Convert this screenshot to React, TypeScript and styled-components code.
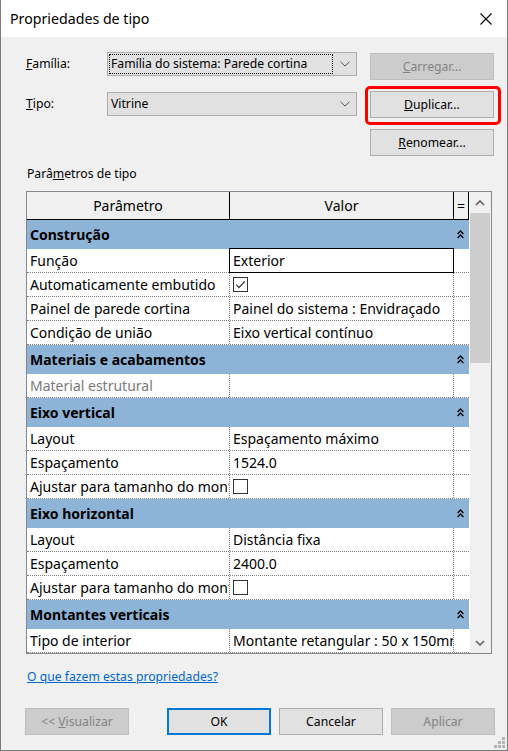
import React from 'react';
import styled, { createGlobalStyle, css } from 'styled-components';

const Global = createGlobalStyle`
  html, body { margin: 0; padding: 0; background: #f0f0f0; }
  body { font-family: "Noto Sans", "Open Sans", "DejaVu Sans", sans-serif; }
  * { box-sizing: border-box; }
`;

const FONT = `"Noto Sans", "Open Sans", "DejaVu Sans", sans-serif`;

const Window = styled.div`
  position: relative;
  width: 508px;
  height: 751px;
  border: 1px solid #7a7a7a;
  border-top: none;
  background: #f0f0f0;
  display: flex;
  flex-direction: column;
  font-family: ${FONT};
  font-size: 12.2px;
  color: #000;
  overflow: hidden;
`;

const TitleBar = styled.div`
  height: 37px;
  flex: none;
  background: #fff;
  display: flex;
  align-items: center;
  justify-content: space-between;
  padding-left: 9px;
`;

const Title = styled.div`
  font-size: 14.2px;
  line-height: 20px;
`;

const CloseButton = styled.div`
  width: 42px;
  height: 37px;
  display: flex;
  align-items: center;
  justify-content: center;
`;

const Body = styled.div`
  flex: 1;
  display: flex;
  flex-direction: column;
  padding: 0 12px 0 25px;
`;

const TopArea = styled.div`
  display: flex;
  margin-top: 15px;
`;

const Fields = styled.div`
  display: flex;
  flex-direction: column;
  gap: 16px;
`;

const FieldRow = styled.div`
  display: flex;
  align-items: center;
  height: 24px;
`;

const FieldLabel = styled.div`
  width: 81px;
  line-height: 20px;
`;

const Combo = styled.div`
  width: 250px;
  height: 24px;
  background: #e1e1e1;
  border: 1px solid #adadad;
  display: flex;
  align-items: stretch;
`;

const ComboText = styled.div<{ $focused?: boolean }>`
  flex: 1;
  margin: 1px 0 1px 1px;
  padding-left: 1px;
  border: 1px dotted ${(p) => (p.$focused ? '#000' : 'transparent')};
  display: flex;
  align-items: center;
  white-space: nowrap;
  overflow: hidden;
  line-height: 18px;
`;

const ComboArrow = styled.div`
  width: 23px;
  display: flex;
  align-items: center;
  justify-content: center;
`;

const SideButtons = styled.div`
  margin-left: auto;
  margin-right: 1px;
  margin-top: 1px;
  display: flex;
  flex-direction: column;
  gap: 11px;
`;

const Button = styled.div<{ $variant?: 'normal' | 'disabled' | 'default'; $w?: number }>`
  width: ${(p) => p.$w ?? 124}px;
  height: 27px;
  display: flex;
  align-items: center;
  justify-content: center;
  line-height: 18px;
  background: #e1e1e1;
  border: 1px solid #adadad;
  color: #000;
  white-space: nowrap;
  ${(p) =>
    p.$variant === 'disabled' &&
    css`
      background: #cccccc;
      border-color: #bfbfbf;
      color: #838383;
    `}
  ${(p) =>
    p.$variant === 'default' &&
    css`
      border: 2px solid #0078d7;
    `}
`;

const Highlighted = styled.div`
  position: relative;
  &::after {
    content: '';
    position: absolute;
    top: -5px;
    right: -7px;
    bottom: -7px;
    left: -5px;
    border: 3px solid #ff0000;
    border-radius: 5px;
    pointer-events: none;
  }
`;

const SectionLabel = styled.div`
  margin-top: 8px;
  margin-bottom: 7px;
  margin-left: 1px;
  line-height: 20px;
  height: 20px;
`;

const GridFrame = styled.div`
  width: 466px;
  height: 463px;
  border: 1px solid #828790;
  display: flex;
  background: #fff;
  font-size: 14px;
`;

const Grid = styled.div`
  width: 443px;
  display: flex;
  flex-direction: column;
  overflow: hidden;
  background: #fff;
`;

const HeaderRow = styled.div`
  display: flex;
  height: 28px;
  width: 442px;
  flex: none;
  background: #f0f0f0;
  border-bottom: 1px solid #000;
`;

const HeaderCell = styled.div<{ $w: number }>`
  width: ${(p) => p.$w}px;
  flex: none;
  border-right: 1px solid #000;
  display: flex;
  align-items: center;
  justify-content: center;
  line-height: 18px;
`;

const CategoryRow = styled.div`
  display: flex;
  align-items: center;
  height: 29px;
  width: 442px;
  flex: none;
  background: #8db3d6;
  font-weight: bold;
`;

const CategoryLabel = styled.div`
  flex: 1;
  padding-left: 3px;
  line-height: 18px;
`;

const CollapseIcon = styled.div`
  width: 15px;
  display: flex;
  justify-content: center;
  padding-right: 3px;
`;

const DataRow = styled.div`
  display: flex;
  height: 24px;
  width: 442px;
  flex: none;
  border-bottom: 1px dotted #7f7f7f;
`;

const ParamCell = styled.div<{ $disabled?: boolean }>`
  width: 203px;
  flex: none;
  padding-left: 3px;
  border-right: 1px dotted #7f7f7f;
  white-space: nowrap;
  overflow: hidden;
  display: flex;
  align-items: center;
  line-height: 18px;
  color: ${(p) => (p.$disabled ? '#7a7a7a' : '#000')};
`;

const ValueCell = styled.div<{ $editing?: boolean }>`
  position: relative;
  width: 224px;
  flex: none;
  padding-left: 3px;
  border-right: 1px dotted #7f7f7f;
  white-space: nowrap;
  overflow: ${(p) => (p.$editing ? 'visible' : 'hidden')};
  display: flex;
  align-items: center;
  line-height: 18px;
  ${(p) =>
    p.$editing &&
    css`
      &::after {
        content: '';
        position: absolute;
        top: -1px;
        left: -1px;
        right: -1px;
        bottom: -1px;
        border: 1px solid #000;
        pointer-events: none;
      }
    `}
`;

const EqCell = styled.div`
  width: 15px;
  flex: none;
`;

const CheckBox = styled.div`
  width: 15px;
  height: 15px;
  border: 1px solid #333;
  background: #fff;
  display: flex;
  align-items: center;
  justify-content: center;
`;

const Scrollbar = styled.div`
  width: 21px;
  margin-left: 1px;
  background: #f0f0f0;
  display: flex;
  flex-direction: column;
`;

const ScrollArrow = styled.div`
  height: 21px;
  flex: none;
  display: flex;
  align-items: center;
  justify-content: center;
  padding-right: 1px;
`;

const ScrollThumb = styled.div`
  height: 150px;
  width: 20px;
  background: #cdcdcd;
  flex: none;
`;

const ScrollTrack = styled.div`
  flex: 1;
`;

const HelpLink = styled.a`
  margin-top: 13px;
  margin-left: 1px;
  line-height: 20px;
  color: #0066cc;
  text-decoration: underline;
  align-self: flex-start;
  cursor: pointer;
`;

const Footer = styled.div`
  display: flex;
  margin-top: 21px;
  margin-left: -1px;
`;

const FooterGroup = styled.div`
  margin-left: auto;
  display: flex;
  gap: 8px;
`;

const Grip = styled.div`
  position: absolute;
  right: 2px;
  bottom: 2px;
  width: 11px;
  height: 11px;
  display: flex;
`;

type Item =
  | { kind: 'cat'; label: string }
  | { kind: 'row'; param: string; value?: string; check?: boolean; disabled?: boolean; editing?: boolean };

const items: Item[] = [
  { kind: 'cat', label: 'Construção' },
  { kind: 'row', param: 'Função', value: 'Exterior', editing: true },
  { kind: 'row', param: 'Automaticamente embutido', check: true },
  { kind: 'row', param: 'Painel de parede cortina', value: 'Painel do sistema : Envidraçado' },
  { kind: 'row', param: 'Condição de união', value: 'Eixo vertical contínuo' },
  { kind: 'cat', label: 'Materiais e acabamentos' },
  { kind: 'row', param: 'Material estrutural', value: '', disabled: true },
  { kind: 'cat', label: 'Eixo vertical' },
  { kind: 'row', param: 'Layout', value: 'Espaçamento máximo' },
  { kind: 'row', param: 'Espaçamento', value: '1524.0' },
  { kind: 'row', param: 'Ajustar para tamanho do montante', check: false },
  { kind: 'cat', label: 'Eixo horizontal' },
  { kind: 'row', param: 'Layout', value: 'Distância fixa' },
  { kind: 'row', param: 'Espaçamento', value: '2400.0' },
  { kind: 'row', param: 'Ajustar para tamanho do montante', check: false },
  { kind: 'cat', label: 'Montantes verticais' },
  { kind: 'row', param: 'Tipo de interior', value: 'Montante retangular : 50 x 150mm' },
];

const Chevron = ({ up }: { up?: boolean }) => (
  <svg width="10" height="6" viewBox="0 0 10 6">
    <path
      d={up ? 'M1 5 L5 1 L9 5' : 'M1 1 L5 5 L9 1'}
      fill="none"
      stroke="#606060"
      strokeWidth="1.6"
    />
  </svg>
);

const ComboChevron = () => (
  <svg width="10" height="6" viewBox="0 0 10 6">
    <path d="M0.5 0.8 L5 5 L9.5 0.8" fill="none" stroke="#555" strokeWidth="1" />
  </svg>
);

const DoubleUp = () => (
  <svg width="7" height="9" viewBox="0 0 7 9">
    <path d="M0.6 4 L3.5 1 L6.4 4 M0.6 8 L3.5 5 L6.4 8" fill="none" stroke="#000" strokeWidth="1.3" />
  </svg>
);

const CloseIcon = () => (
  <svg width="12" height="12" viewBox="0 0 12 12">
    <path d="M0.5 0.5 L11.5 11.5 M11.5 0.5 L0.5 11.5" stroke="#000" strokeWidth="1.1" />
  </svg>
);

const Check = () => (
  <svg width="13" height="13" viewBox="0 0 13 13">
    <path d="M2.2 6.8 L5 9.5 L10.8 3.5" fill="none" stroke="#444" strokeWidth="1.3" />
  </svg>
);

const GripIcon = () => (
  <svg width="11" height="11" viewBox="0 0 11 11">
    {[
      [8, 0],
      [4, 4],
      [8, 4],
      [0, 8],
      [4, 8],
      [8, 8],
    ].map(([x, y], i) => (
      <rect key={i} x={x} y={y} width="3" height="3" fill="#b4b4b4" />
    ))}
  </svg>
);

export default function App() {
  return (
    <>
      <Global />
      <Window>
        <TitleBar>
          <Title>Propriedades de tipo</Title>
          <CloseButton>
            <CloseIcon />
          </CloseButton>
        </TitleBar>
        <Body>
          <TopArea>
            <Fields>
              <FieldRow>
                <FieldLabel>
                  <u>F</u>amília:
                </FieldLabel>
                <Combo>
                  <ComboText $focused>Família do sistema: Parede cortina</ComboText>
                  <ComboArrow>
                    <ComboChevron />
                  </ComboArrow>
                </Combo>
              </FieldRow>
              <FieldRow>
                <FieldLabel>
                  <u>T</u>ipo:
                </FieldLabel>
                <Combo>
                  <ComboText>Vitrine</ComboText>
                  <ComboArrow>
                    <ComboChevron />
                  </ComboArrow>
                </Combo>
              </FieldRow>
            </Fields>
            <SideButtons>
              <Button $variant="disabled">
                <span>
                  <u>C</u>arregar...
                </span>
              </Button>
              <Highlighted>
                <Button>
                  <span>
                    <u>D</u>uplicar...
                  </span>
                </Button>
              </Highlighted>
              <Button>
                <span>
                  <u>R</u>enomear...
                </span>
              </Button>
            </SideButtons>
          </TopArea>
          <SectionLabel>
            Parâ<u>m</u>etros de tipo
          </SectionLabel>
          <GridFrame>
            <Grid>
              <HeaderRow>
                <HeaderCell $w={203}>Parâmetro</HeaderCell>
                <HeaderCell $w={224}>Valor</HeaderCell>
                <HeaderCell $w={15}>=</HeaderCell>
              </HeaderRow>
              {items.map((it, i) =>
                it.kind === 'cat' ? (
                  <CategoryRow key={i}>
                    <CategoryLabel>{it.label}</CategoryLabel>
                    <CollapseIcon>
                      <DoubleUp />
                    </CollapseIcon>
                  </CategoryRow>
                ) : (
                  <DataRow key={i}>
                    <ParamCell $disabled={it.disabled}>{it.param}</ParamCell>
                    <ValueCell $editing={it.editing}>
                      {it.check !== undefined ? (
                        <CheckBox>{it.check && <Check />}</CheckBox>
                      ) : (
                        it.value
                      )}
                    </ValueCell>
                    <EqCell />
                  </DataRow>
                )
              )}
            </Grid>
            <Scrollbar>
              <ScrollArrow>
                <Chevron up />
              </ScrollArrow>
              <ScrollThumb />
              <ScrollTrack />
              <ScrollArrow>
                <Chevron />
              </ScrollArrow>
            </Scrollbar>
          </GridFrame>
          <HelpLink>O que fazem estas propriedades?</HelpLink>
          <Footer>
            <Button $variant="disabled" $w={104}>
              <span>
                &lt;&lt; <u>V</u>isualizar
              </span>
            </Button>
            <FooterGroup>
              <Button $variant="default" $w={104}>
                OK
              </Button>
              <Button $w={104}>Cancelar</Button>
              <Button $variant="disabled" $w={104}>
                Aplicar
              </Button>
            </FooterGroup>
          </Footer>
        </Body>
        <Grip>
          <GripIcon />
        </Grip>
      </Window>
    </>
  );
}
